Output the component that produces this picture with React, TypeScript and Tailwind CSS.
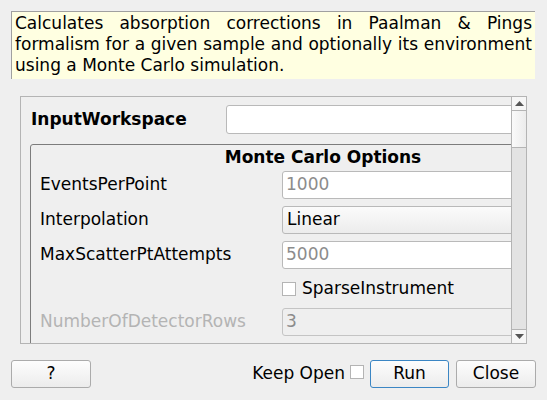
const FONT = "font-['DejaVu_Sans',sans-serif]";

function TextBox({ value, muted, disabled }: { value?: string; muted?: boolean; disabled?: boolean }) {
  const tone = disabled
    ? "border-[#c4c4c4] bg-[#efefef] text-[#8c8c8c]"
    : muted
      ? "border-[#b9b9b9] bg-white text-[#8c8c8c]"
      : "border-[#b9b9b9] bg-white text-black";
  return <div className={`flex h-[28px] w-full items-center rounded-[3px] border px-[3px] ${tone}`}>{value}</div>;
}

function Combo({ value }: { value: string }) {
  return (
    <div className="flex h-[28px] w-full items-center rounded-[3px] border border-[#b9b9b9] bg-gradient-to-b from-[#fbfbfb] to-[#ececec] px-[4px] text-black">
      {value}
    </div>
  );
}

function Check() {
  return <span className="inline-block h-[14px] w-[14px] shrink-0 border border-[#b4b4b4] bg-white" />;
}

function Row({ label, children, dim }: { label?: string; children: React.ReactNode; dim?: boolean }) {
  return (
    <div className="flex h-[28px] items-center">
      <div className={`w-[251px] shrink-0 pl-[9px] ${dim ? "text-[#b4b4b4]" : "text-black"}`}>{label}</div>
      <div className="flex-1 pr-[10px]">{children}</div>
    </div>
  );
}

function Button({ label, primary }: { label: string; primary?: boolean }) {
  return (
    <div
      className={`flex h-[28px] items-center justify-center rounded-[3px] border bg-gradient-to-b from-[#fdfdfd] to-[#ececec] ${
        primary ? "w-[79px] border-[#3b86c4]" : "w-[80px] border-[#ababab]"
      }`}
    >
      {label}
    </div>
  );
}

export default function App() {
  return (
    <div className={`${FONT} flex h-[400px] w-[547px] flex-col overflow-hidden bg-[#efefef] text-[17px] text-black`}>
      {/* description */}
      <div className="ml-[11px] mt-[11px] h-[68px] w-[524px] border-l border-t border-[#a0a0a0] bg-[#ffffe1] px-[3px] pt-[1px] text-justify leading-[21px] [text-align-last:left]">
        Calculates absorption corrections in Paalman &amp; Pings formalism for a given sample and optionally its
        environment using a Monte Carlo simulation.
      </div>

      {/* scroll area */}
      <div className="ml-[20px] mt-[17px] flex h-[248px] w-[507px] border border-[#b4b4b4]">
        <div className="relative flex-1 overflow-hidden">
          <div className="w-[630px] pt-[8px]">
            <div className="flex h-[29px] items-center">
              <div className="w-[205px] shrink-0 pl-[10px] font-bold">InputWorkspace</div>
              <div className="flex-1">
                <div className="h-[29px] w-full rounded-[3px] border border-[#b9b9b9] bg-white" />
              </div>
            </div>

            <div className="ml-[9px] mt-[10px] w-[586px] rounded-[3px] border border-[#7c7c7c]">
              <div className="flex h-[26px] items-center justify-center font-bold">Monte Carlo Options</div>
              <div className="flex flex-col gap-[7px]">
                <Row label="EventsPerPoint">
                  <TextBox value="1000" muted />
                </Row>
                <Row label="Interpolation">
                  <Combo value="Linear" />
                </Row>
                <Row label="MaxScatterPtAttempts">
                  <TextBox value="5000" muted />
                </Row>
                <div className="flex h-[25px] items-center pl-[251px]">
                  <Check />
                  <span className="ml-[6px]">SparseInstrument</span>
                </div>
                <Row label="NumberOfDetectorRows" dim>
                  <TextBox value="3" disabled />
                </Row>
                <div className="h-[40px]" />
              </div>
            </div>
          </div>
        </div>

        {/* scrollbar */}
        <div className="flex w-[15px] flex-col border-l border-[#b4b4b4] bg-[#e3e3e3]">
          <div className="flex h-[14px] items-center justify-center border-b border-[#b4b4b4] bg-[#f6f6f6]">
            <svg width="9" height="5" viewBox="0 0 9 5">
              <path d="M0 5 L4.5 0 L9 5 Z" fill="#555" />
            </svg>
          </div>
          <div className="h-[37px] border-b border-[#b4b4b4] bg-gradient-to-r from-[#fafafa] to-[#ececec]" />
          <div className="flex-1" />
          <div className="flex h-[14px] items-center justify-center border-t border-[#b4b4b4] bg-[#f6f6f6]">
            <svg width="9" height="5" viewBox="0 0 9 5">
              <path d="M0 0 L9 0 L4.5 5 Z" fill="#555" />
            </svg>
          </div>
        </div>
      </div>

      {/* buttons */}
      <div className="mt-[16px] flex items-center px-[11px]">
        <Button label="?" />
        <div className="flex-1" />
        <span>Keep Open</span>
        <span className="ml-[5px] mr-[6px]">
          <Check />
        </span>
        <Button label="Run" primary />
        <div className="w-[7px]" />
        <Button label="Close" />
      </div>
    </div>
  );
}
